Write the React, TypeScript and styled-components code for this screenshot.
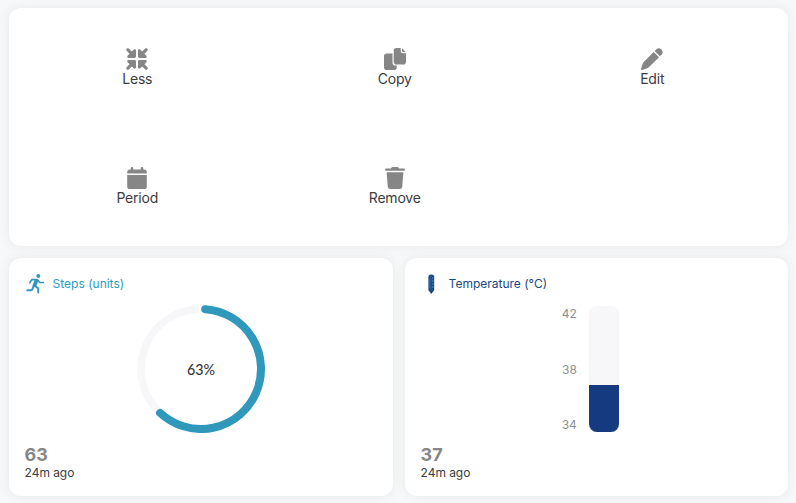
import React from "react";
import styled, { createGlobalStyle } from "styled-components";

const Global = createGlobalStyle`
  * { box-sizing: border-box; }
  body { margin: 0; background: #f7f8fa; font-family: Inter, sans-serif; color: #3c3c3e; }
`;

const Page = styled.main`
  width: 796px;
  height: 503px;
  padding: 8px 8px 7px 9px;
  display: grid;
  grid-template-rows: 238px 238px;
  gap: 12px;
  overflow: hidden;
`;

const Card = styled.section`
  background: #fff;
  border-radius: 12px;
  box-shadow: 0 0 12px rgba(0, 0, 0, 0.07);
`;

const Actions = styled(Card)`
  display: grid;
  grid-template-columns: repeat(3, 257.5px);
  grid-template-rows: 119px 119px;
`;

const Action = styled.button`
  display: flex;
  flex-direction: column;
  align-items: center;
  border: 0;
  padding: 40px 1px 0 0;
  background: none;
  color: #3c3c3e;
  font: 400 14px/18px Inter, sans-serif;
  letter-spacing: -0.2px;
`;

const ActionIcon = styled.svg`
  width: 22px;
  height: 22px;
  flex: none;
  color: #868686;
  fill: currentColor;
`;

const Metrics = styled.div`
  display: grid;
  grid-template-columns: 384px 383px;
  gap: 12px;
`;

const MetricCard = styled(Card)`
  display: grid;
  grid-template-rows: 20px 130px 1fr;
  padding: 16px 16px 15px 15.6px;
`;

const MetricTitle = styled.h2<{ $color: string }>`
  display: flex;
  align-items: center;
  gap: 8px;
  margin: 0;
  color: ${(p) => p.$color};
  font-size: 12px;
  font-weight: 400;
  line-height: 20px;
`;

const TitleIcon = styled.span`
  width: 20px;
  height: 20px;
  display: flex;
  align-items: center;
  justify-content: center;
`;

const Figure = styled.div`
  display: flex;
  justify-content: center;
  padding-top: 11px;
`;

const RingSvg = styled.svg`
  width: 128px;
  height: 128px;
  flex: none;
`;

const Gauge = styled.div`
  display: flex;
  gap: 12px;
  height: 127px;
  padding: 1px 0 0;
  margin-left: -12px;
`;

const Scale = styled.div`
  display: flex;
  flex-direction: column;
  justify-content: space-between;
  height: 126px;
  color: #8e8e8e;
  font-size: 12px;
  line-height: 15px;
  text-align: right;
`;

const Track = styled.div`
  display: flex;
  align-items: flex-end;
  width: 30px;
  height: 126px;
  border-radius: 8px;
  overflow: hidden;
  background: #f7f7fa;
`;

const Fill = styled.div`
  width: 100%;
  height: 47px;
  background: #153a80;
`;

const Reading = styled.div`
  align-self: end;
  font-size: 12px;
  line-height: 16px;
  letter-spacing: -0.05px;
`;

const Value = styled.div`
  color: #868686;
  font-size: 18px;
  font-weight: 700;
  line-height: 20px;
`;

const Arrow = () => (
  <path d="M.6 2.8C-.6 1.2 1.2-.6 2.8.6L5.8 3.5 7.6 1.8C8.4 1 10 1.2 10 2.4V8.6Q10 10 8.6 10H2.4C1.2 10 1 8.4 1.8 7.6L3.5 5.8Z" />
);

const icons = {
  Less: (
    <>
      <Arrow />
      <g transform="translate(22 0) scale(-1 1)"><Arrow /></g>
      <g transform="translate(0 22) scale(1 -1)"><Arrow /></g>
      <g transform="translate(22 22) scale(-1 -1)"><Arrow /></g>
    </>
  ),
  Copy: (
    <>
      <path d="M2.8 5.4H8.5V14.5Q8.5 17.6 11.6 17.6H12.8V19.2Q12.8 22 10 22H2.8Q0 22 0 19.2V8.2Q0 5.4 2.8 5.4Z" />
      <path d="M12.5 0H16.7V3Q16.7 5.2 18.9 5.2H22V13.7Q22 16.5 19.2 16.5H12.5Q9.7 16.5 9.7 13.7V2.8Q9.7 0 12.5 0Z" />
      <path d="M18 .3L21.7 4.1H19Q18 4.1 18 3.1Z" />
    </>
  ),
  Edit: (
    <>
      <path d="M12.7 4L18 9.3 8.6 18.6Q7.2 20 5.6 20.6L1.5 21.9Q-.1 22.2.1 20.6L1.5 16.3Q2 14.7 3.4 13.3Z" />
      <path d="M13.6 3.1L15.7 1.1C18.8-1.5 23.5 3 20.9 6.2L18.9 8.3Z" />
    </>
  ),
  Period: (
    <>
      <path d="M1.2 6.6V5Q1.2 2.4 3.8 2.4H4.7V1.4Q4.7 0 6 0T7.3 1.4V2.4H14.7V1.4Q14.7 0 16 0T17.3 1.4V2.4H18.2Q20.8 2.4 20.8 5V6.6Z" />
      <path d="M1.2 8.1H20.8V19.4Q20.8 22 18.2 22H3.8Q1.2 22 1.2 19.4Z" />
    </>
  ),
  Remove: (
    <>
      <path d="M2.2 1.4H6.9Q7.7 0 9 0H13Q14.3 0 15.1 1.4H19.8Q21 1.4 21 2.6T19.8 3.8H2.2Q1 3.8 1 2.6T2.2 1.4Z" />
      <path d="M2.6 5.2H19.4L18.2 19.7Q18 22 15.8 22H6.2Q4 22 3.8 19.7Z" />
    </>
  ),
};

const RADIUS = 60;
const point = (degrees: number) => {
  const a = (degrees * Math.PI) / 180;
  return `${64 + RADIUS * Math.sin(a)} ${64 - RADIUS * Math.cos(a)}`;
};

const Ring = () => (
  <RingSvg viewBox="0 0 128 128" fill="none" role="img" aria-label="63%">
    <path d={`M${point(223)} A60 60 0 0 1 ${point(358)}`} stroke="#f7f7f9" strokeWidth="7.5" />
    <path d={`M${point(4)} A60 60 0 1 1 ${point(223)}`} stroke="#3098bb" strokeWidth="8" strokeLinecap="round" />
    <text x="64" y="69.5" textAnchor="middle" textLength="28" lengthAdjust="spacingAndGlyphs" fill="#38383a" fontFamily="Lato, sans-serif" fontSize="15.5" fontWeight="500">63%</text>
  </RingSvg>
);

const Runner = () => (
  <svg width="20" height="20" viewBox="0 0 20 20" fill="none" stroke="#3098bb" strokeLinecap="round" strokeLinejoin="round">
    <circle cx="13.3" cy="2.1" r="2" fill="#3098bb" stroke="none" />
    <path d="M11.3 6.9L9.6 11.2" strokeWidth="3.8" />
    <path d="M4.8 8.7L6.8 5.7H12.4L14.9 8.5H18.3" strokeWidth="1.7" />
    <path d="M8.7 11.2L7.6 14.9Q7.1 16.3 5.8 16.2H2.3" strokeWidth="1.9" />
    <path d="M9.8 11.8L13.2 14.2V18.6" strokeWidth="1.9" />
  </svg>
);

const Thermometer = () => (
  <svg width="20" height="20" viewBox="0 0 20 20">
    <path d="M8.8 17H11.8L11 19.5H9.6Z" fill="#153a80" />
    <rect x="7.4" y=".6" width="5.8" height="17.2" rx="2.6" fill="#174985" />
    <path d="M8.3 5V14" stroke="#4a79a6" strokeWidth=".7" />
    <path d="M11 4H12.6M10.7 7H12.6M11 10H12.6M10.7 13H12.6" stroke="#6e98bd" strokeWidth=".9" />
    <path d="M10 2V16" stroke="#245e96" strokeWidth="1" />
  </svg>
);

export default function App() {
  return (
    <>
      <Global />
      <Page>
        <Actions>
          {Object.entries(icons).map(([label, icon]) => (
            <Action key={label}>
              <ActionIcon viewBox="0 0 22 22">{icon}</ActionIcon>
              {label}
            </Action>
          ))}
        </Actions>
        <Metrics>
          <MetricCard>
            <MetricTitle $color="#2b9cbb"><TitleIcon><Runner /></TitleIcon>Steps (units)</MetricTitle>
            <Figure><Ring /></Figure>
            <Reading><Value>63</Value>24m ago</Reading>
          </MetricCard>
          <MetricCard>
            <MetricTitle $color="#174985"><TitleIcon><Thermometer /></TitleIcon>Temperature (°C)</MetricTitle>
            <Figure>
              <Gauge>
                <Scale><span>42</span><span>38</span><span>34</span></Scale>
                <Track><Fill /></Track>
              </Gauge>
            </Figure>
            <Reading><Value>37</Value>24m ago</Reading>
          </MetricCard>
        </Metrics>
      </Page>
    </>
  );
}
